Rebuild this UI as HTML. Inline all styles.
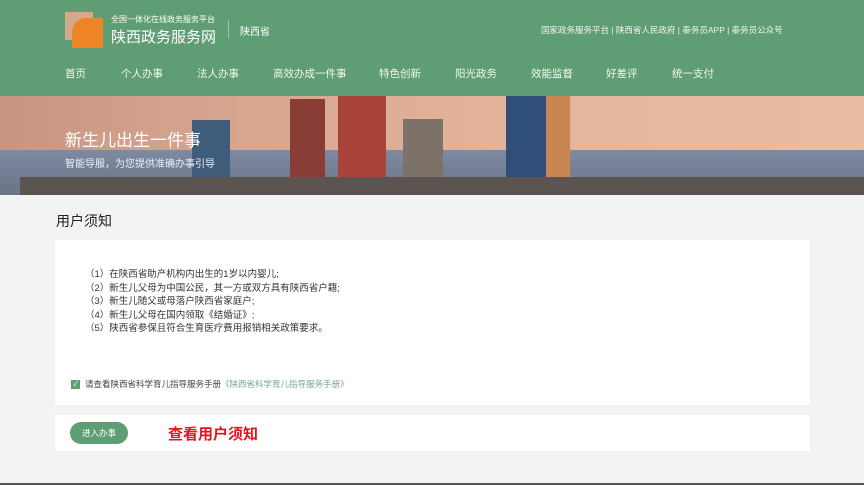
<!DOCTYPE html><html><head><meta charset="utf-8"><style>
*{margin:0;padding:0;box-sizing:border-box}
body{width:864px;height:485px;overflow:hidden;background:#f2f3f3;font-family:"Liberation Sans","Noto Sans CJK SC",sans-serif;position:relative}
.hd{position:absolute;left:0;top:0;width:864px;height:96px;background:#5f9d74;color:#fff}
.abs{position:absolute}
.nav span{position:absolute;top:66px;font-size:10.5px;color:#f2f7f3}
.banner{position:absolute;left:0;top:96px;width:864px;height:99px;background:linear-gradient(90deg,#c99583 0%,#d8a790 30%,#e3b49a 60%,#e9bda3 100%);overflow:hidden}
.b{position:absolute;bottom:0}
.card{position:absolute;background:#fff}
.li{font-size:9.5px;color:#333;line-height:13.5px}
</style></head><body>
<div class="hd">
 <div class="abs" style="left:65px;top:12px;width:28px;height:28px;background:#d4a98c"></div>
 <div class="abs" style="left:72px;top:18px;width:31px;height:30px;background:#ef8427;border-radius:14px 0 0 0"></div>
 <div class="abs" style="left:111px;top:14px;font-size:8px">全国一体化在线政务服务平台</div>
 <div class="abs" style="left:111px;top:26px;font-size:15px">陕西政务服务网</div>
 <div class="abs" style="left:228px;top:20px;width:1px;height:18px;background:#9cc4a8"></div>
 <div class="abs" style="left:240px;top:23px;font-size:10px">陕西省</div>
 <div class="abs" style="left:541px;top:24px;font-size:8.5px;color:#eef5f0">国家政务服务平台 | 陕西省人民政府 | 秦务员APP | 秦务员公众号</div>
 <div class="nav"><span style="left:65px">首页</span><span style="left:121px">个人办事</span><span style="left:197px">法人办事</span><span style="left:273px">高效办成一件事</span><span style="left:379px">特色创新</span><span style="left:455px">阳光政务</span><span style="left:531px">效能监督</span><span style="left:606px">好差评</span><span style="left:672px">统一支付</span></div>
</div>
<div class="banner">
 <div class="b" style="left:0;width:864px;height:45px;background:linear-gradient(#7d8aa0,#6b7486)"></div>
 <div class="b" style="left:192px;width:38px;height:75px;background:#3f5c7a"></div>
 <div class="b" style="left:290px;width:35px;height:96px;background:#8a3c36"></div>
 <div class="b" style="left:338px;width:48px;height:99px;background:#a8443a"></div>
 <div class="b" style="left:403px;width:40px;height:76px;background:#7c7268"></div>
 <div class="b" style="left:506px;width:40px;height:99px;background:#2f4f78"></div>
 <div class="b" style="left:546px;width:24px;height:99px;background:#c98650"></div>
 <div class="b" style="left:20px;width:844px;height:18px;background:#5b5450"></div>
 <div class="abs" style="left:65px;top:30px;font-size:17px;color:#fff">新生儿出生一件事</div>
 <div class="abs" style="left:65px;top:59px;font-size:10px;color:#eef">智能导服，为您提供准确办事引导</div>
</div>
<div class="abs" style="left:56px;top:211px;font-size:14px;color:#222">用户须知</div>
<div class="card" style="left:55px;top:240px;width:755px;height:165px">
 <div class="li" style="position:absolute;left:30px;top:28px">（1）在陕西省助产机构内出生的1岁以内婴儿;<br>（2）新生儿父母为中国公民，其一方或双方具有陕西省户籍;<br>（3）新生儿随父或母落户陕西省家庭户;<br>（4）新生儿父母在国内领取《结婚证》;<br>（5）陕西省参保且符合生育医疗费用报销相关政策要求。</div>
 <div class="abs" style="left:16px;top:140px;width:9px;height:9px;background:#5f9d74;color:#fff;font-size:7px;line-height:9px;text-align:center">✓</div>
 <div class="abs" style="left:30px;top:138px;font-size:8.5px;color:#444">请查看陕西省科学育儿指导服务手册<span style="color:#7aa98a">《陕西省科学育儿指导服务手册》</span></div>
</div>
<div class="card" style="left:55px;top:415px;width:755px;height:36px">
 <div class="abs" style="left:15px;top:7px;width:58px;height:22px;border-radius:11px;background:#5f9d74;color:#fff;font-size:8.5px;line-height:22px;text-align:center">进入办事</div>
 <div class="abs" style="left:113px;top:8px;font-size:15px;font-weight:bold;color:#e8121a">查看用户须知</div>
</div>
<div class="abs" style="left:0;top:483px;width:864px;height:2px;background:#555"></div>
</body></html>
